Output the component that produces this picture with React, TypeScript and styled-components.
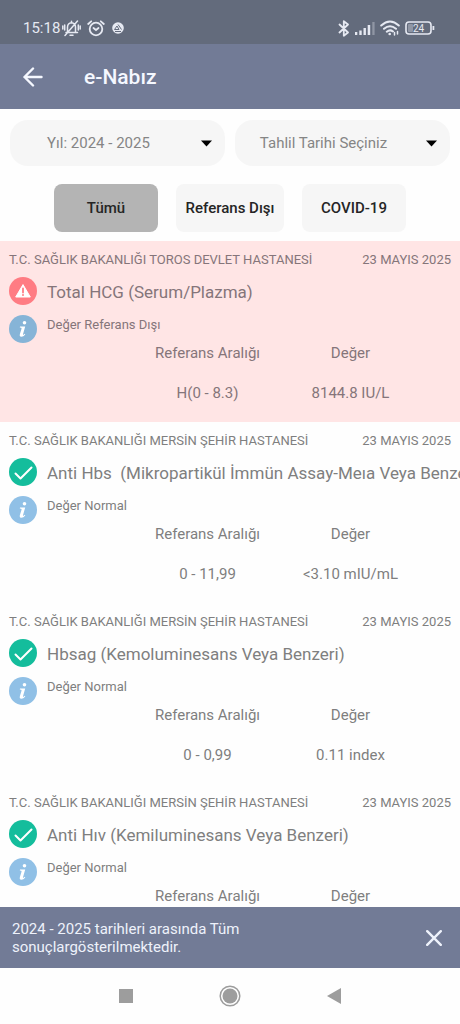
import React from 'react';
import styled, { createGlobalStyle } from 'styled-components';

const GlobalStyle = createGlobalStyle`
  * { box-sizing: border-box; }
  body {
    margin: 0;
    background: #fefefe;
    color: #7f7f7f;
    font-family: Roboto, "Noto Sans", sans-serif;
  }
  button, select { font: inherit; }
`;

const Screen = styled.div`
  display: flex;
  flex-direction: column;
  height: 100vh;
  overflow: hidden;
`;

const StatusBar = styled.div`
  display: flex;
  align-items: center;
  justify-content: space-between;
  flex: none;
  height: 44px;
  padding: 12px 25px 0 23px;
  background: #636b7c;
  color: #e6e9f2;
  font-size: 15px;
`;

const StatusGroup = styled.div<{ $gap: number }>`
  display: flex;
  align-items: center;
  gap: ${(p) => p.$gap}px;
  svg { display: block; }
`;

const Header = styled.header`
  display: flex;
  align-items: center;
  gap: 36px;
  flex: none;
  height: 65px;
  padding: 0 18px;
  background: #727b96;
  color: #f5f8ff;
`;

const IconButton = styled.button`
  display: grid;
  place-items: center;
  flex: none;
  width: 30px;
  height: 30px;
  padding: 0;
  border: 0;
  background: none;
  color: inherit;
  cursor: pointer;
`;

const Title = styled.h1`
  margin: 0;
  font-size: 21px;
  font-weight: 500;
`;

const Filters = styled.div`
  display: flex;
  flex: none;
  gap: 10px;
  padding: 11px 10px 0;
`;

const SelectBox = styled.label`
  position: relative;
  flex: 1;
  svg {
    position: absolute;
    top: 20px;
    right: 12px;
    pointer-events: none;
  }
`;

const Select = styled.select`
  display: block;
  width: 100%;
  height: 46px;
  padding: 0 38px 0 0;
  border: 0;
  border-radius: 18px;
  background: #f6f6f6;
  color: #858585;
  font-size: 15px;
  text-align: center;
  text-align-last: center;
  appearance: none;
`;

const Tabs = styled.div`
  display: flex;
  justify-content: center;
  flex: none;
  gap: 18px;
  padding: 18px 0 9px;
`;

const Tab = styled.button<{ $active?: boolean }>`
  width: 104px;
  height: 48px;
  padding: 0;
  border: 0;
  border-radius: 8px;
  background: ${(p) => (p.$active ? '#b4b4b4' : '#f6f6f6')};
  color: #252525;
  font-size: 15px;
  font-weight: 500;
  white-space: nowrap;
  cursor: pointer;
  &:nth-child(2) { width: 108px; }
`;

const Results = styled.main`
  flex: 1;
  min-height: 0;
  overflow-y: auto;
  scrollbar-width: none;
`;

const Result = styled.article<{ $alert?: boolean }>`
  padding: 11px 0 19px 9px;
  background: ${(p) => (p.$alert ? '#ffe5e5' : 'transparent')};
  color: ${(p) => (p.$alert ? '#85757a' : '#7f7f7f')};
`;

const Meta = styled.div`
  display: flex;
  justify-content: space-between;
  padding-right: 9px;
  margin-bottom: 9px;
  font-size: 13px;
  line-height: 16px;
  white-space: nowrap;
`;

const Line = styled.div`
  display: flex;
  gap: 10px;
  height: 28px;
  overflow: hidden;
  svg { flex: none; }
`;

const TestName = styled.h2`
  margin: 0;
  font-size: 17px;
  font-weight: 400;
  line-height: 30px;
  white-space: pre;
`;

const Status = styled.p`
  margin: 0;
  font-size: 13px;
  line-height: 20px;
`;

const InfoLine = styled(Line)`
  margin-top: 10px;
`;

const Values = styled.div`
  padding: 0 38px 0 127px;
`;

const ValueTable = styled.table`
  width: 100%;
  table-layout: fixed;
  border-collapse: collapse;
  font-size: 15px;
  line-height: 20px;
  text-align: center;
  th { padding: 0; font-weight: 400; }
  td { padding: 20px 0 0; }
`;

const Notice = styled.div`
  display: flex;
  align-items: center;
  justify-content: space-between;
  flex: none;
  padding: 13px 11px 12px 12px;
  background: #727b96;
  color: #eef2fb;
  font-size: 15px;
  line-height: 18px;
  p { margin: 0; max-width: 260px; }
`;

const NavBar = styled.nav`
  display: flex;
  align-items: center;
  justify-content: center;
  flex: none;
  gap: 74px;
  height: 56px;
  color: #9d9d9d;
`;

const Caret = () => (
  <svg width="13" height="7" viewBox="0 0 13 7" aria-hidden="true">
    <path d="M1 .5h11L6.500 6.500z" fill="#000" />
  </svg>
);

const AlertIcon = () => (
  <svg width="28" height="28" viewBox="0 0 28 28" aria-hidden="true">
    <circle cx="14" cy="14" r="14" fill="#ff7c83" />
    <path d="M14 7.600 21.300 20H6.700z" fill="#fff" stroke="#fff" strokeWidth="1" strokeLinejoin="round" />
    <path d="M14 11.500v4" stroke="#ff7c83" strokeWidth="1.800" strokeLinecap="round" />
    <circle cx="14" cy="17.900" r="1" fill="#ff7c83" />
  </svg>
);

const CheckIcon = () => (
  <svg width="28" height="28" viewBox="0 0 28 28" aria-hidden="true">
    <circle cx="14" cy="14" r="14" fill="#14bd9c" />
    <path d="m6.500 15.500 5 5L22.500 9.500" fill="none" stroke="#fff" strokeWidth="2" strokeLinecap="round" strokeLinejoin="round" />
  </svg>
);

const InfoIcon = ({ alert }: { alert?: boolean }) => (
  <svg width="28" height="28" viewBox="0 0 28 28" aria-hidden="true">
    <circle cx="14" cy="14" r="14" fill={alert ? '#86b4d7' : '#90c0e6'} />
    <circle cx="15.500" cy="7.800" r="1.800" fill="#fff" />
    <path d="M11 11.500h5.200l-2.200 7.700q-.2 1 .7.500l1-.9.600.6q-2 2.500-4.100 2.400-2-.2-1.300-2.800l1.700-5.600q.2-.9-1.800-.9z" fill="#fff" />
  </svg>
);

const MutedBell = () => (
  <svg width="19" height="17" viewBox="0 0 19 17" fill="none" stroke="currentColor" strokeWidth="1.500" strokeLinecap="round" aria-hidden="true">
    <path d="M4 12.500h11.500M5.500 12V7q.2-4 4-4.300 3.800.3 4 4.300v5M8 15.300h3M9.500 1.200v1M3 15.500 15.500 1M.8 6v3M2.700 5v5M16.300 5v5M18.200 6v3" />
  </svg>
);

const AlarmClock = () => (
  <svg width="18" height="17" viewBox="0 0 18 17" fill="none" stroke="currentColor" strokeWidth="1.800" strokeLinecap="round" aria-hidden="true">
    <circle cx="9" cy="9" r="6.300" />
    <path d="m6.500 8 2.500 2 2.500-2M1.200 4l3-2.700M16.800 4l-3-2.700" />
  </svg>
);

const AppBadge = () => (
  <svg width="12" height="12" viewBox="0 0 12 12" aria-hidden="true">
    <circle cx="6" cy="6" r="5.800" fill="currentColor" />
    <path d="M6 2.500 9.500 7.500M5 4 2.500 7.500H7L5 4M3 9.500h6" stroke="#636b7c" strokeWidth="1" fill="none" />
  </svg>
);

const Bluetooth = () => (
  <svg width="12" height="17" viewBox="0 0 12 17" fill="none" stroke="currentColor" strokeWidth="1.800" strokeLinejoin="round" strokeLinecap="round" aria-hidden="true">
    <path d="m1.500 4.500 8.500 8-4.200 3.300V1.200L10 4.500l-8.500 8" />
  </svg>
);

const Signal = () => (
  <svg width="20" height="14" viewBox="0 0 20 14" fill="currentColor" aria-hidden="true">
    <path d="M0 11h2.300v3H0zM4.300 9.500h2.400V14H4.300zM8.500 7h2.400v7H8.500zM12.700 4h2.500v10h-2.500z" />
    <path d="M17.300 1h2.300v13h-2.300z" opacity=".35" />
  </svg>
);

const Wifi = () => (
  <svg width="20" height="16" viewBox="0 0 20 16" fill="none" stroke="currentColor" strokeWidth="2" strokeLinecap="round" aria-hidden="true">
    <path d="M1.200 5.500q8.800-8 17.600 0M4 8.800q6-5.200 12 0M6.800 11.700q3.200-2.600 6.200-.2" />
    <circle cx="9.700" cy="14" r="1.300" fill="currentColor" stroke="none" />
    <path d="M14.500 12.500v2.500M17.500 11.500V14" strokeWidth="1.500" />
  </svg>
);

const Battery = () => (
  <svg width="30" height="14" viewBox="0 0 30 14" aria-hidden="true">
    <rect x="1" y="1" width="25" height="12" rx="3" fill="none" stroke="currentColor" strokeWidth="1.600" />
    <rect x="3" y="3" width="5" height="8" rx="1" fill="currentColor" opacity=".35" />
    <path d="M27.500 5h1.800v4h-1.800z" fill="currentColor" />
    <text x="13.500" y="10.500" fontSize="10" textAnchor="middle" fill="currentColor">24</text>
  </svg>
);

type ResultData = {
  hospital: string;
  name: string;
  range?: string;
  value?: string;
  alert?: boolean;
};

const results: ResultData[] = [
  { hospital: 'T.C. SAĞLIK BAKANLIĞI TOROS DEVLET HASTANESİ', name: 'Total HCG (Serum/Plazma)', range: 'H(0 - 8.3)', value: '8144.8 IU/L', alert: true },
  { hospital: 'T.C. SAĞLIK BAKANLIĞI MERSİN ŞEHİR HASTANESİ', name: 'Anti Hbs  (Mikropartikül İmmün Assay-Meıa Veya Benzeri)', range: '0 - 11,99', value: '<3.10 mIU/mL' },
  { hospital: 'T.C. SAĞLIK BAKANLIĞI MERSİN ŞEHİR HASTANESİ', name: 'Hbsag (Kemoluminesans Veya Benzeri)', range: '0 - 0,99', value: '0.11 index' },
  { hospital: 'T.C. SAĞLIK BAKANLIĞI MERSİN ŞEHİR HASTANESİ', name: 'Anti Hıv (Kemiluminesans Veya Benzeri)' },
];

export default function App() {
  return (
    <Screen>
      <GlobalStyle />
      <StatusBar>
        <StatusGroup $gap={7}>
          <StatusGroup $gap={6}>
            <StatusGroup $gap={2}>
              <span>15:18</span>
              <MutedBell />
            </StatusGroup>
            <AlarmClock />
          </StatusGroup>
          <AppBadge />
        </StatusGroup>
        <StatusGroup $gap={5}>
          <Bluetooth />
          <Signal />
          <Wifi />
          <Battery />
        </StatusGroup>
      </StatusBar>
      <Header>
        <IconButton aria-label="Geri">
          <svg width="20" height="20" viewBox="0 0 20 20" fill="none" stroke="currentColor" strokeWidth="2.400" strokeLinecap="round" strokeLinejoin="round">
            <path d="M18.500 10H1.500M10 1.500 1.500 10l8.500 8.500" />
          </svg>
        </IconButton>
        <Title>e-Nabız</Title>
      </Header>
      <Filters>
        <SelectBox>
          <Select aria-label="Yıl">
            <option>Yıl: 2024 - 2025</option>
          </Select>
          <Caret />
        </SelectBox>
        <SelectBox>
          <Select aria-label="Tahlil Tarihi">
            <option>Tahlil Tarihi Seçiniz</option>
          </Select>
          <Caret />
        </SelectBox>
      </Filters>
      <Tabs>
        <Tab $active>Tümü</Tab>
        <Tab>Referans Dışı</Tab>
        <Tab>COVID-19</Tab>
      </Tabs>
      <Results>
        {results.map((r) => (
          <Result key={r.name} $alert={r.alert}>
            <Meta>
              <span>{r.hospital}</span>
              <time dateTime="2025-05-23">23 MAYIS 2025</time>
            </Meta>
            <Line>
              {r.alert ? <AlertIcon /> : <CheckIcon />}
              <TestName>{r.name}</TestName>
            </Line>
            <InfoLine>
              <InfoIcon alert={r.alert} />
              <Status>{r.alert ? 'Değer Referans Dışı' : 'Değer Normal'}</Status>
            </InfoLine>
            <Values>
              <ValueTable>
                <thead>
                  <tr>
                    <th scope="col">Referans Aralığı</th>
                    <th scope="col">Değer</th>
                  </tr>
                </thead>
                {r.value && (
                  <tbody>
                    <tr>
                      <td>{r.range}</td>
                      <td>{r.value}</td>
                    </tr>
                  </tbody>
                )}
              </ValueTable>
            </Values>
          </Result>
        ))}
      </Results>
      <Notice role="status">
        <p>2024 - 2025 tarihleri arasında Tüm sonuçlargösterilmektedir.</p>
        <IconButton aria-label="Kapat">
          <svg width="16" height="16" viewBox="0 0 16 16" stroke="currentColor" strokeWidth="2.400" strokeLinecap="round">
            <path d="m1.200 1.200 13.600 13.600M14.800 1.200 1.200 14.800" />
          </svg>
        </IconButton>
      </Notice>
      <NavBar>
        <IconButton aria-label="Son uygulamalar">
          <svg width="14" height="14" viewBox="0 0 14 14"><path d="M0 0h14v14H0z" fill="currentColor" /></svg>
        </IconButton>
        <IconButton aria-label="Ana ekran">
          <svg width="22" height="22" viewBox="0 0 22 22">
            <circle cx="11" cy="11" r="9.800" fill="none" stroke="currentColor" strokeWidth="1.500" />
            <circle cx="11" cy="11" r="7.500" fill="currentColor" />
          </svg>
        </IconButton>
        <IconButton aria-label="Geri dön">
          <svg width="14" height="16" viewBox="0 0 14 16"><path d="M14 0v16L0 8z" fill="currentColor" /></svg>
        </IconButton>
      </NavBar>
    </Screen>
  );
}
